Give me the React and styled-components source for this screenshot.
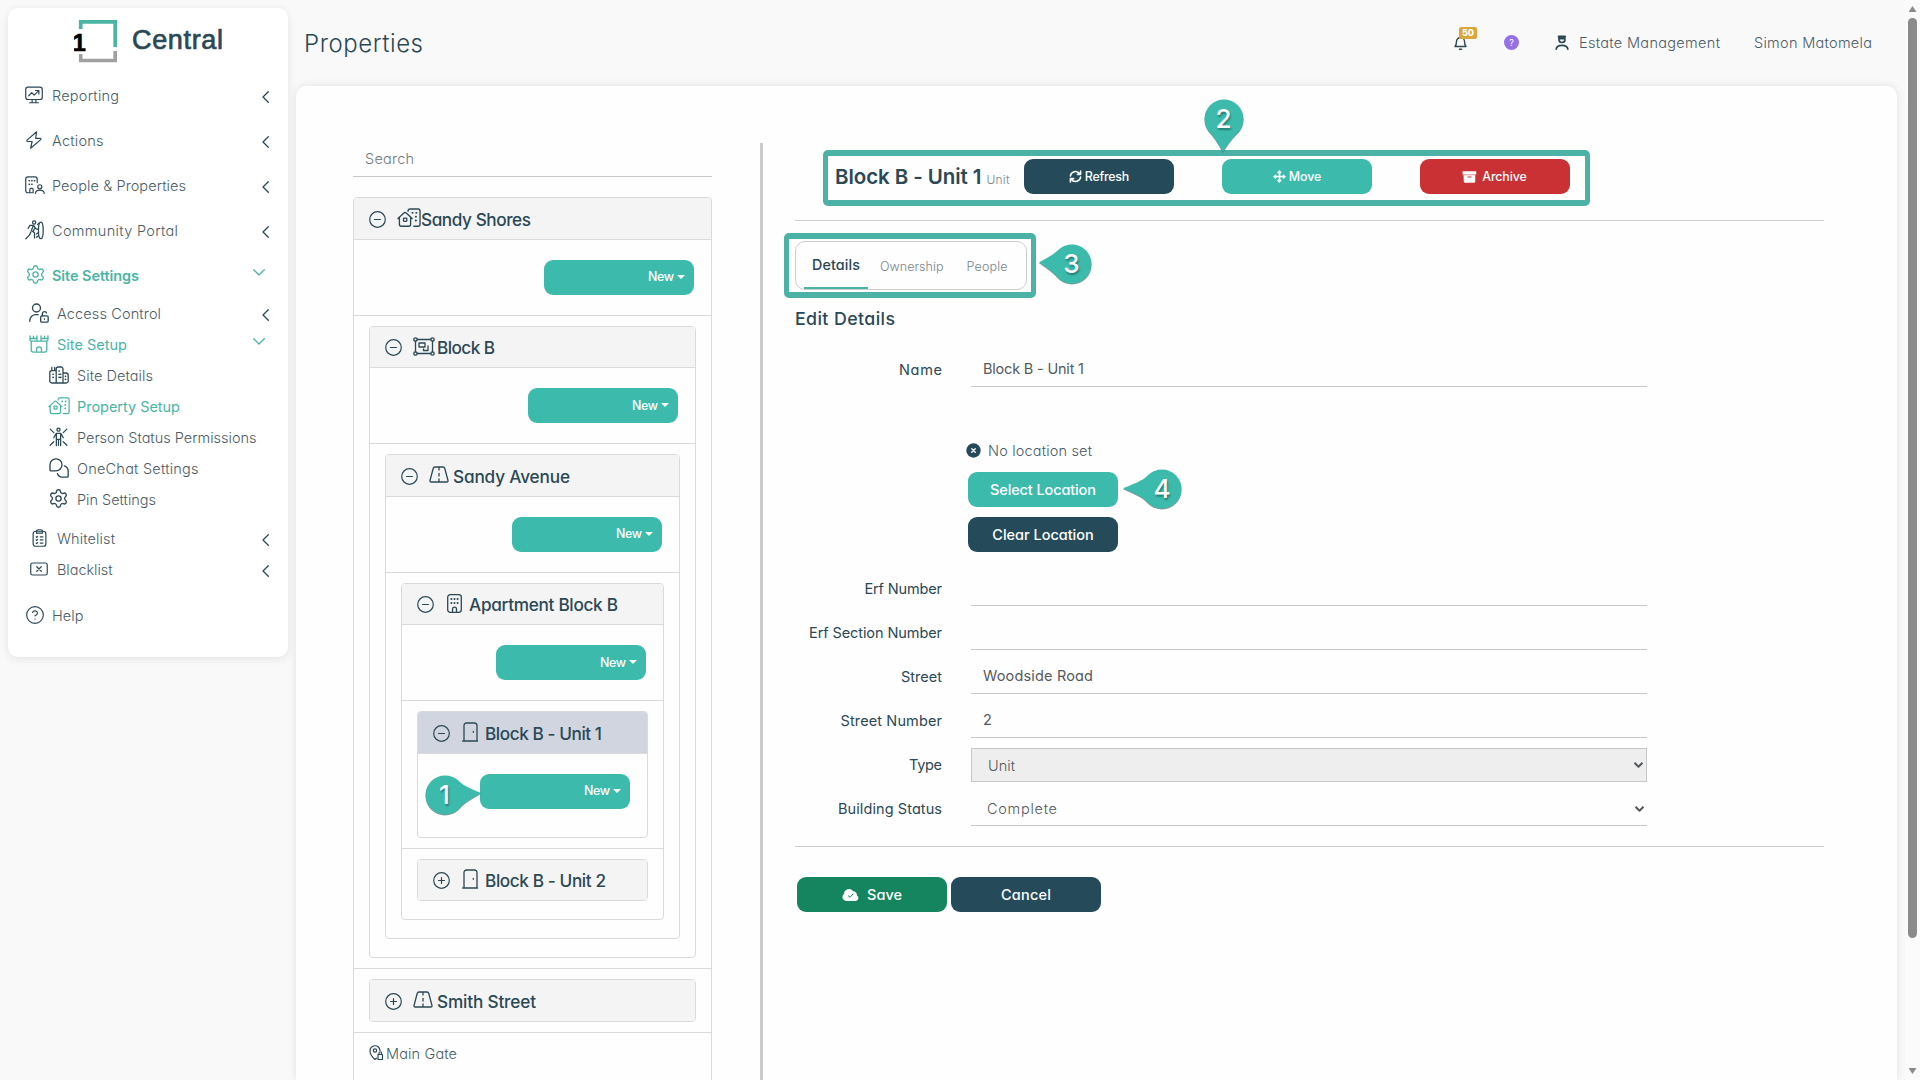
import React, { useLayoutEffect, useRef } from "react";
import styled, { createGlobalStyle, css } from "styled-components";
import { Settings, CircleHelp } from "lucide-react";

const c = {
  ink: "#2b4855",
  soft: "#4a5c65",
  navy: "#254b5a",
  teal: "#3cbbad",
  mint: "#4ab5a4",
  red: "#c93134",
  green: "#158560",
  line: "#cbcdce",
  card: "#d9dbdb",
};

const GlobalStyle = createGlobalStyle`
  *, *::before, *::after { box-sizing: border-box; }
  body {
    margin: 0;
    overflow: hidden;
    background: #f9f9f9;
    color: ${c.ink};
    font-family: Inter, "Open Sans", "Liberation Sans", sans-serif;
    font-size: 14.5px;
    font-weight: 300;
    font-feature-settings: "cv11" 1;
  }
`;

/* Text tracked out so that it fills the given width */
const FitSpan = styled.span`
  display: inline-block;
  white-space: nowrap;
`;

function Fit({ w, children }) {
  const ref = useRef(null);
  useLayoutEffect(() => {
    const el = ref.current;
    el.style.letterSpacing = "0px";
    const natural = el.getBoundingClientRect().width;
    const gaps = Math.max(children.length - 1, 1);
    const ls = (w - natural) / gaps;
    el.style.letterSpacing = `${ls}px`;
    el.style.marginRight = `${-ls}px`;
  }, [w, children]);
  return <FitSpan ref={ref}>{children}</FitSpan>;
}

/* ---------- icons ---------- */

const Glyph = styled.svg`
  display: block;
  flex: none;
  width: ${(p) => p.$w || 20}px;
  height: ${(p) => p.$h || p.$w || 20}px;
  fill: none;
  stroke: currentColor;
  stroke-width: ${(p) => p.$s || 1.6};
  stroke-linecap: round;
  stroke-linejoin: round;
  overflow: visible;
`;

const Reporting = () => (
  <Glyph $w={18} viewBox="0 0 24 24">
    <rect x="1" y="1.5" width="22" height="16.5" rx="3" />
    <path d="M9.5 18v4M14.5 18v4M6 22.3h12M5 13l4-4 3.2 3.2L18 6.500M14 6h4.500v4.500" />
  </Glyph>
);
const Actions = () => (
  <Glyph $w={18} viewBox="0 0 24 24">
    <path d="M15.500 1 2.800 12.200c-.8.800-.3 1.800.8 1.800H9.500l-2 9L21 11.500c.8-.8.300-1.800-.8-1.800h-6z" />
  </Glyph>
);
const People = () => (
  <Glyph $w={20} $h={18} viewBox="0 0 27 24">
    <path d="M9 22.500H4a3 3 0 0 1-3-3V4a3 3 0 0 1 3-3h9.500a3 3 0 0 1 3 3v5M6.500 22.500v-4.500a1.500 1.500 0 0 1 1.500-1.500h1.500a1.500 1.500 0 0 1 1.500 1.500v4.500H7" />
    <path d="M5.500 6.300h.6M9 6.300h.6M12.600 6.300h.6M5.500 11h.6M9 11h.6" strokeWidth="2" />
    <circle cx="20" cy="14.500" r="2.800" />
    <path d="M14 23.500c.3-3.500 2.800-4.500 6-4.500s5.700 1 6 4.500" />
  </Glyph>
);
const Community = () => (
  <Glyph $w={19} $h={20} viewBox="0 0 24 25">
    <circle cx="11.500" cy="3" r="2" />
    <ellipse cx="20" cy="13" rx="3" ry="10.500" />
    <path d="M4 10.500 6 6.800h5l2.500 4 3 1M10.500 7l-2.500 6 4 3v6.500M7.500 15 5.500 19 1 23.500M11.800 11l-1.200 3M16.500 16l-2 1.500M17 20l-2.500 1.500M16 5.500l1.500-1.500" />
  </Glyph>
);
const Access = () => (
  <Glyph $w={20} viewBox="0 0 24 24">
    <circle cx="9" cy="6" r="4.800" />
    <path d="M1 22v-1.500a7 7 0 0 1 7-6.500h3" />
    <rect x="14" y="15.500" width="9" height="7.500" rx="1.500" />
    <path d="M16 15.500v-2.500a2.600 2.600 0 0 1 5-1M18.500 19v.6" />
  </Glyph>
);
const SiteSetup = () => (
  <Glyph $w={20} $h={18} viewBox="0 0 24 22">
    <path d="M1 1v4.500a2 2 0 0 0 2 2h6.500V1M5.200 1.500v3M1 4.300h8.500M14.500 1v6.500H21a2 2 0 0 0 2-2V1M18.800 1.500v3M14.500 4.300H23M9.500 7.500h5M2.500 7.500v11A2.500 2.500 0 0 0 5 21h14a2.500 2.500 0 0 0 2.500-2.500v-11M9 21v-3.500a3 3 0 0 1 6 0V21" />
  </Glyph>
);
const SiteDetails = () => (
  <Glyph $w={20} $h={18} viewBox="0 0 25 22">
    <path d="M9 21H3.500A2.500 2.500 0 0 1 1 18.500V8a2.500 2.500 0 0 1 2.500-2.500H9M3.500 5.500V1.500M7 5.500V1.500M9 21V3.500A2.500 2.500 0 0 1 11.500 1H15a2.500 2.500 0 0 1 2.500 2.500V21M17.500 8.500h3.500a3 3 0 0 1 3 3v7a2.500 2.500 0 0 1-2.500 2.500H9" />
    <path d="M5 10h.3M5 14h.3M12.500 6h.3M14.500 10h.3M12.500 10h.3M12.500 14h.3M14.500 14h.3M20.500 12.500h.3M20.500 16.500h.3" strokeWidth="2" />
  </Glyph>
);
const House = ({ w = 22 }) => (
  <Glyph $w={w} $h={w * 0.8} $s={1.4} viewBox="0 0 25 20">
    <path d="M1 11 7.200 5.300a1.800 1.800 0 0 1 2.400 0L15.800 11M2.500 10v7a2 2 0 0 0 2 2h7.700a2 2 0 0 0 2-2v-7" />
    <rect x="6.800" y="10.500" width="3.400" height="3.400" rx=".5" />
    <path d="M11.500 3.500V3a2 2 0 0 1 2-2H22a2 2 0 0 1 2 2v14a2 2 0 0 1-2 2h-4.500" />
    <path d="M16 5h.3M20 5h.3M19.500 9h.3M19.500 13h.3" strokeWidth="1.900" />
  </Glyph>
);
const Status = () => (
  <Glyph $w={19} $h={20} viewBox="0 0 24 25">
    <circle cx="12" cy="3.200" r="2" />
    <path d="M1.500 2.500 6 7M22.500 2.500 18 7M1.500 23 6 18.500M22.500 23 18 18.500M6 13.500l3-5.500h6l3 5.500M9.300 9v14.500M14.700 9v14.500M12 16v7M10 15.500h4" />
  </Glyph>
);
const Chat = () => (
  <Glyph $w={20} viewBox="0 0 24 24">
    <path d="M1.200 14.500V8.200a7.200 7.200 0 1 1 7.200 7.200H2.200a1 1 0 0 1-1-.9zM18.500 9.500a6.800 6.800 0 0 1 4.500 6.500v6.200a.8.8 0 0 1-.8.800H16.500a6.800 6.800 0 0 1-6.300-4.200" />
  </Glyph>
);
const Whitelist = () => (
  <Glyph $w={15} $h={18} viewBox="0 0 19 24">
    <rect x="1" y="3" width="17" height="20" rx="3.500" />
    <path d="M5.500 5.500V3.500A2.500 2.500 0 0 1 8 1h3a2.500 2.500 0 0 1 2.500 2.500v2zM5 10.500l.8.800 1.200-1.500M5 14.500l.8.800 1.200-1.500M5 18.800l.8.800 1.200-1.500M10.500 10.500H14M10.500 14.500H14M10.500 18.800H14" />
  </Glyph>
);
const Blacklist = () => (
  <Glyph $w={18} $h={14} viewBox="0 0 24 18">
    <rect x="1" y="1" width="22" height="16" rx="2.500" />
    <path d="M9 6l6 6M15 6l-6 6" />
  </Glyph>
);
const Road = () => (
  <Glyph $w={20} $h={17} $s={1.3} viewBox="0 0 20 17">
    <path d="M1 14.500 4.200 2.500A2 2 0 0 1 6.100 1h7.800a2 2 0 0 1 1.900 1.500l3.200 12c.2.900-.3 1.500-1.200 1.500H2.200C1.300 16 .8 15.400 1 14.500zM10 1v3M10 7.300v2.700M10 13v3" />
  </Glyph>
);
const Block = () => (
  <Glyph $w={22} $h={19} $s={1.3} viewBox="0 0 22 19">
    <circle cx="2.500" cy="2.500" r="1.700" />
    <circle cx="19.500" cy="2.500" r="1.700" />
    <circle cx="2.500" cy="16.500" r="1.700" />
    <circle cx="19.500" cy="16.500" r="1.700" />
    <path d="M4.200 2.500h13.600M4.200 16.500h13.600M2.500 4.200v10.600M19.500 4.200v10.600M6 6h6v4H6zM15 9v4.500h-4.500v-1.500" />
  </Glyph>
);
const Apartment = () => (
  <Glyph $w={15} $h={19} $s={1.3} viewBox="0 0 15 19">
    <rect x=".7" y=".7" width="13.600" height="17.600" rx="2.500" />
    <path d="M5.500 18.200v-3a2 2 0 0 1 4 0v3" />
    <path d="M4.300 5h.2M7.400 5h.2M10.500 5h.2M4.300 9h.2M7.400 9h.2M10.500 9h.2" strokeWidth="1.800" />
  </Glyph>
);
const Door = () => (
  <Glyph $w={16} $h={20} $s={1.3} viewBox="0 0 16 20">
    <path d="M.7 19h14.800M2 19V3.500A2.500 2.500 0 0 1 4.500 1h8A2.500 2.500 0 0 1 15 3.500V19M11.300 9.500v.8" />
  </Glyph>
);
const Gate = () => (
  <Glyph $w={15} $h={16} $s={1.2} viewBox="0 0 15 16">
    <circle cx="6" cy="5.500" r="1.700" />
    <path d="M7.500 13.200 6 14.500C2.500 11.500 1 9 1 6a5 5 0 0 1 10-.5M9 9.500h4.500v5H9zM10 9.500V8a1.200 1.200 0 0 1 2.500 0v1.500" />
  </Glyph>
);
const Toggle = ({ open }) => (
  <Glyph $w={17} $s={1.2} viewBox="0 0 17 17">
    <circle cx="8.500" cy="8.500" r="7.800" />
    <path d={open ? "M5.500 8.500h6" : "M5.500 8.500h6M8.500 5.500v6"} />
  </Glyph>
);
const RefreshIcon = () => (
  <Glyph $w={13} $s={1.7} viewBox="0 0 14 14">
    <path d="M1.500 6.500A5.500 5.500 0 0 1 11.500 4M12.500 1.200v3.500H9M12.500 7.500a5.500 5.500 0 0 1-10 2.500M1.500 12.800V9.300H5" />
  </Glyph>
);
const MoveIcon = () => (
  <Glyph $w={13} $s={1.8} viewBox="0 0 14 14">
    <path d="M7 2.500v9M2.500 7h9" />
    <path d="M7 .8 8.800 3H5.200zM7 13.200 8.800 11H5.200zM.8 7 3 5.200v3.600zM13.200 7 11 5.200v3.600z" fill="currentColor" strokeWidth="1" />
  </Glyph>
);
const ArchiveIcon = () => (
  <Glyph $w={13} $h={12} $s={0.5} viewBox="0 0 13 12">
    <path d="M0 .5h13v2.800H0z" fill="currentColor" />
    <path d="M1 4.200h11v6.300a1 1 0 0 1-1 1H2a1 1 0 0 1-1-1z" fill="currentColor" />
    <path d="M5 6h3" stroke={c.red} strokeWidth="1" />
  </Glyph>
);
const CloudIcon = () => (
  <Glyph $w={17} $h={13} viewBox="0 0 17 13">
    <path d="M4.200 13A4 4 0 0 1 2 5.800 5 5 0 0 1 11 3a4.200 4.200 0 0 1 4 4.500A3 3 0 0 1 14 13z" fill="currentColor" stroke="none" />
    <path d="M6.300 7.800 8 9.300l3-3.300" stroke={c.green} strokeWidth="1" />
  </Glyph>
);
const BellIcon = () => (
  <Glyph $w={13} $h={14} $s={1.4} viewBox="0 0 13 14">
    <path d="M1 10.500c1.200-1.500 1.500-2.500 1.500-5a4 4 0 0 1 8 0c0 2.500.3 3.500 1.500 5zM5.500 13.200h2" />
  </Glyph>
);
const OfficerIcon = () => (
  <Glyph $w={14} $h={15} $s={1.7} viewBox="0 0 14 15">
    <path d="M3.500 1h7l-.6 3H4.100z" fill="currentColor" strokeWidth="1" />
    <path d="M4 4.500a3 3 0 0 0 6 0M1.200 14.200C1.500 11.500 4 10.300 7 10.300s5.500 1.200 5.800 3.900" />
  </Glyph>
);
const CrossDot = () => (
  <Glyph $w={15} $s={1.3} viewBox="0 0 15 15">
    <circle cx="7.500" cy="7.500" r="7.200" fill={c.navy} stroke="none" />
    <path d="M5.700 5.700l3.600 3.600M9.300 5.700 5.700 9.300" stroke="#fff" />
  </Glyph>
);
const ChevronLeft = () => (
  <Glyph $w={7} $h={12} $s={1.3} viewBox="0 0 7 12">
    <path d="M6.300.700 1 6l5.300 5.300" />
  </Glyph>
);
const ChevronDown = () => (
  <Glyph $w={12} $h={7} $s={1.3} viewBox="0 0 12 7">
    <path d="M.700.700 6 6 11.300.700" />
  </Glyph>
);
const SelectArrow = () => (
  <Glyph $w={9} $h={6} $s={2} viewBox="0 0 9 6">
    <path d="M.5.700l4 4 4-4" strokeLinecap="butt" />
  </Glyph>
);

/* ---------- shell ---------- */

const Page = styled.div`
  position: relative;
  display: flex;
  width: 1920px;
  height: 1080px;
  overflow: hidden;
  background: #f9f9f9;
`;

const Sidebar = styled.nav`
  display: flex;
  flex-direction: column;
  flex: none;
  width: 280px;
  height: 649px;
  margin: 8px 8px 0;
  border-radius: 10px;
  background: #fff;
  box-shadow: 0 2px 10px rgba(0, 0, 0, 0.09);
`;

const Brand = styled.div`
  display: flex;
  align-items: center;
  gap: 14px;
  height: 64.5px;
  padding-left: 66px;
  font: 400 27px "Liberation Sans", Arial, sans-serif;
  color: ${c.ink};
  -webkit-text-stroke: 0.7px ${c.ink};
`;

const LogoMark = styled.svg`
  width: 44px;
  height: 43px;
  margin-top: 2px;
  -webkit-text-stroke: 0;
`;

const LogoDigit = styled.text`
  font: 700 24px "Liberation Sans", Arial, sans-serif;
  fill: #000;
  stroke: #000;
  stroke-width: 0.6px;
`;

const indent = { 1: 17, 2: 21, 3: 40 };
const iconCol = { 1: 27, 2: 28, 3: 29 };

const NavItem = styled.a`
  display: flex;
  align-items: center;
  flex: none;
  height: ${(p) => (p.$level === 1 ? 45 : 31)}px;
  margin-top: ${(p) => (p.$gap ? 8 : 0)}px;
  padding: 0 19px 0 ${(p) => indent[p.$level]}px;
  color: ${(p) => (p.$active ? c.mint : c.soft)};
  font-weight: ${(p) => (p.$strong ? 600 : p.$active ? 400 : 300)};
`;

const NavIcon = styled.span`
  display: flex;
  align-items: center;
  flex: none;
  width: ${(p) => iconCol[p.$level]}px;
  margin-top: -1px;
  padding-left: ${(p) => p.$inset || 0}px;
  color: ${(p) => (p.$active ? c.mint : c.ink)};
`;

const NavArrow = styled.span`
  margin-left: auto;
  padding-top: ${(p) => (p.$open ? 0 : 3)}px;
  padding-bottom: ${(p) => (p.$open ? 6 : 0)}px;
  padding-right: ${(p) => (p.$open ? 4 : 0)}px;
  color: ${(p) => (p.$open ? c.mint : c.ink)};
`;

const Main = styled.main`
  display: flex;
  flex-direction: column;
  flex: none;
  width: 1601px;
  height: 1080px;
`;

const TopBar = styled.header`
  display: flex;
  align-items: center;
  flex: none;
  height: 86px;
  padding-left: 8px;
  color: ${c.soft};
`;

const PageTitle = styled.h1`
  margin: 0;
  font-size: 24px;
  font-weight: 300;
  color: ${c.ink};
`;

const TopActions = styled.div`
  display: flex;
  align-items: center;
  margin-left: auto;
  padding: 0 25px 1px 0;
`;

const Bell = styled.span`
  position: relative;
  margin-right: 37px;
  color: ${c.ink};
`;

const Count = styled.span`
  position: absolute;
  left: 5px;
  top: -9px;
  width: 18px;
  height: 12px;
  border-radius: 2px;
  background: #dba63a;
  color: #fff;
  font-size: 9px;
  font-weight: 800;
  line-height: 12px;
  text-align: center;
`;

const HelpDot = styled.span`
  width: 15px;
  height: 15px;
  margin-right: 36px;
  border-radius: 50%;
  background: #9670e4;
  color: #fff;
  font-size: 9px;
  font-weight: 400;
  line-height: 15px;
  text-align: center;
`;

const Role = styled.span`
  display: flex;
  align-items: center;
  gap: 10px;
  margin-right: 34px;
  svg { color: ${c.ink}; }
`;

const Panel = styled.section`
  display: flex;
  flex: 1;
  min-height: 0;
  padding: 57px 0 0 57px;
  overflow: hidden;
  border-radius: 10px 10px 0 0;
  background: #fefefe;
  box-shadow: 0 0 8px rgba(0, 0, 0, 0.1);
`;

/* ---------- property tree ---------- */

const Tree = styled.div`
  flex: none;
  width: 359px;
`;

const Search = styled.div`
  display: flex;
  align-items: center;
  height: 34px;
  margin-bottom: 20px;
  padding: 0 0 2px 12px;
  border-bottom: 1px solid #c8caca;
  color: #70787c;
`;

const Card = styled.div`
  border: 1px solid ${c.card};
  border-radius: 4px;
  background: #fefefe;
  ${(p) => p.$root && css`height: 1000px;`}
`;

const CardHead = styled.div`
  display: flex;
  align-items: center;
  height: ${(p) => (p.$closed ? 40.5 : 41.5)}px;
  padding: 2px 0 0 15px;
  border-bottom: ${(p) => (p.$closed ? 0 : 1)}px solid ${c.card};
  border-radius: ${(p) => (p.$closed ? "3px" : "3px 3px 0 0")};
  background: ${(p) => (p.$selected ? "#d0d5df" : "#f4f4f4")};
  font-size: 17.2px;
  font-weight: 500;
`;

const CardIcon = styled.span`
  display: flex;
  align-items: center;
  width: 35px;
  margin-top: -3px;
  padding-left: ${(p) => p.$inset}px;
`;

const ActionRow = styled.div`
  display: flex;
  justify-content: flex-end;
  height: 76px;
  padding: 20px 17px 0 0;
  border-bottom: ${(p) => (p.$leaf ? 0 : 1)}px solid ${c.card};
  ${(p) => p.$leaf && css`height: 83px;`}
`;

const Branch = styled.div`
  padding: 10px 15px ${(p) => (p.$last ? 18 : 10)}px;
  border-bottom: ${(p) => (p.$last ? 0 : 1)}px solid ${c.card};
`;

const GateRow = styled.div`
  display: flex;
  align-items: center;
  gap: 2px;
  height: 41px;
  padding-left: 15px;
  color: ${c.soft};
  svg { color: ${c.ink}; }
`;

const tones = { teal: c.teal, navy: c.navy, red: c.red, green: c.green };

const Button = styled.button`
  display: flex;
  align-items: center;
  justify-content: ${(p) => (p.$menu ? "flex-end" : "center")};
  gap: ${(p) => p.$gap || 3}px;
  width: 150px;
  height: 35px;
  padding: ${(p) => (p.$menu ? "0 9px 1px 0" : "0")};
  border: 0;
  border-radius: 9px;
  background: ${(p) => tones[p.$tone]};
  color: #fff;
  font-family: inherit;
  font-feature-settings: inherit;
  font-size: ${(p) => (p.$large ? 14.5 : 12.4)}px;
  font-weight: 500;
`;

const Caret = styled.i`
  border: 4px solid transparent;
  border-top-color: #fff;
  border-bottom: 0;
`;

const cardIcons = {
  estate: [<House w={24} />, 3],
  block: [<Block />, 3],
  road: [<Road />, 3],
  apartment: [<Apartment />, 5],
  door: [<Door />, 4],
};

function Head({ icon, name, w, open, selected }) {
  const [svg, inset] = cardIcons[icon];
  return (
    <CardHead $closed={!open} $selected={selected}>
      <Toggle open={open} />
      <CardIcon $inset={inset + 8}>{svg}</CardIcon>
      <Fit w={w}>{name}</Fit>
    </CardHead>
  );
}

function Node({ node, root }) {
  const kids = node.children || [];
  return (
    <Card $root={root}>
      <Head {...node} />
      {node.open && (
        <ActionRow $leaf={!kids.length}>
          <Button $tone="teal" $menu>
            <Fit w={26}>New</Fit>
            <Caret />
          </Button>
        </ActionRow>
      )}
      {kids.map((k, i) => (
        <Branch key={k.name} $last={!root && i === kids.length - 1}>
          <Node node={k} />
        </Branch>
      ))}
      {root && (
        <GateRow>
          <Gate />
          <Fit w={71}>Main Gate</Fit>
        </GateRow>
      )}
    </Card>
  );
}

const estate = {
  icon: "estate", name: "Sandy Shores", w: 110, open: true,
  children: [
    {
      icon: "block", name: "Block B", w: 58, open: true,
      children: [
        {
          icon: "road", name: "Sandy Avenue", w: 117, open: true,
          children: [
            {
              icon: "apartment", name: "Apartment Block B", w: 149, open: true,
              children: [
                { icon: "door", name: "Block B - Unit 1", w: 117, open: true, selected: true },
                { icon: "door", name: "Block B - Unit 2", w: 121 },
              ],
            },
          ],
        },
      ],
    },
    { icon: "road", name: "Smith Street", w: 99 },
  ],
};

/* ---------- details ---------- */

const Splitter = styled.div`
  flex: none;
  width: 3px;
  margin: 0 32px 0 48px;
  background: #cacaca;
`;

const Details = styled.div`
  flex: none;
  width: 1029px;
`;

const UnitBar = styled.div`
  display: flex;
  align-items: center;
  height: 78px;
  padding: 16px 0 26px 40px;
  border-bottom: 1px solid ${c.line};
`;

const UnitName = styled.h2`
  display: flex;
  align-items: baseline;
  gap: 5px;
  width: 189px;
  margin: 0;
  font-size: 20.5px;
  font-weight: 600;
`;

const UnitKind = styled.small`
  color: #78858b;
  font-size: 12px;
  font-weight: 300;
`;

const UnitButtons = styled.div`
  display: flex;
  gap: 48px;
`;

const Tabs = styled.div`
  display: flex;
  width: 232px;
  height: 49px;
  margin-top: 20px;
  padding: 0 8px;
  border: 1px solid ${c.line};
  border-radius: 10px;
`;

const Tab = styled.div`
  display: flex;
  align-items: center;
  padding: ${(p) => (p.$active ? "0 8px 1px" : "2px 11px 0 12px")};
  border-bottom: ${(p) => (p.$active ? 2 : 0)}px solid ${c.mint};
  color: ${(p) => (p.$active ? c.ink : "#78858b")};
  font-size: ${(p) => (p.$active ? 14.3 : 12.5)}px;
  font-weight: ${(p) => (p.$active ? 500 : 300)};
`;

const SectionTitle = styled.h3`
  display: flex;
  align-items: center;
  height: 36px;
  margin: 10px 0 17px;
  font-size: 17.8px;
  font-weight: 500;
`;

const Form = styled.div`
  display: flex;
  flex-direction: column;
  gap: 10px;
  padding-bottom: 20px;
  border-bottom: 1px solid ${c.line};
`;

const Field = styled.div`
  display: grid;
  grid-template-columns: 147px 676px;
  column-gap: 29px;
`;

const Label = styled.label`
  display: flex;
  align-items: center;
  justify-content: flex-end;
  padding-bottom: 2px;
  font-weight: 400;
`;

const Control = styled.div`
  display: flex;
  align-items: center;
  justify-content: space-between;
  height: 34px;
  border-bottom: 1px solid #c6c8c8;
  color: #54595c;
  font-weight: ${(p) => (p.$select ? 300 : 400)};
  padding: ${(p) => (p.$select ? "0 3px 0 16px" : "0 0 2px 12px")};
  ${(p) => p.$disabled && css`
    border: 1px solid #c6c8c8;
    background: #eeeeee;
  `}
`;

const Location = styled.div`
  display: flex;
  flex-direction: column;
  gap: 10px;
  margin: 41px 0 10px 173px;
`;

const LocationState = styled.div`
  display: flex;
  align-items: center;
  gap: 7px;
  height: 24px;
  margin-left: -2px;
  color: ${c.soft};
`;

const FormButtons = styled.div`
  display: flex;
  gap: 4px;
  padding: 30px 0 0 2px;
`;

const fields = [
  { label: "Erf Number", lw: 77.5 },
  { label: "Erf Section Number", lw: 133 },
  { label: "Street", lw: 41, value: "Woodside Road", vw: 110 },
  { label: "Street Number", lw: 101.5, value: "2", vw: 9 },
  { label: "Type", lw: 33, value: "Unit", vw: 27, select: true, disabled: true },
  { label: "Building Status", lw: 104, value: "Complete", vw: 70, select: true },
];

function FormField({ label, lw, value, vw, select, disabled }) {
  return (
    <Field>
      <Label><Fit w={lw}>{label}</Fit></Label>
      <Control $select={select} $disabled={disabled}>
        {value && <Fit w={vw}>{value}</Fit>}
        {select && <SelectArrow />}
      </Control>
    </Field>
  );
}

/* ---------- scrollbar ---------- */

const ScrollTrack = styled.div`
  display: flex;
  flex-direction: column;
  align-items: center;
  flex: none;
  width: 15px;
  margin-left: 8px;
  padding-top: 6px;
  background: #fbfbfb;
`;

const ScrollThumb = styled.div`
  width: 9px;
  height: 920px;
  margin: 6px 0 130px;
  border-radius: 5px;
  background: #8b8b8b;
`;

const ScrollArrow = styled.i`
  width: 8px;
  height: 6px;
  background: #8b8b8b;
  clip-path: ${(p) => (p.$up ? "polygon(50% 0, 100% 100%, 0 100%)" : "polygon(0 0, 100% 0, 50% 100%)")};
`;

/* ---------- callouts over the page ---------- */

const Outline = styled.div`
  position: absolute;
  left: ${(p) => p.$x}px;
  top: ${(p) => p.$y}px;
  width: ${(p) => p.$w}px;
  height: ${(p) => p.$h}px;
  border: solid #4bb2a5;
  border-width: 6px 5px;
  border-radius: 5px;
`;

const Pin = styled.div`
  position: absolute;
  left: ${(p) => p.$x - 20}px;
  top: ${(p) => p.$y - 20}px;
  width: 40px;
  height: 40px;
  color: #fff;
  font-size: 26px;
  font-weight: 500;
  line-height: 39px;
  text-align: center;
  text-shadow: 1px 2px 2px rgba(20, 70, 65, 0.55);
`;

const PinShape = styled.svg`
  position: absolute;
  inset: 0;
  width: 40px;
  height: 40px;
  overflow: visible;
  fill: ${c.teal};
  filter: drop-shadow(0 1px 0.5px rgba(30, 90, 85, 0.6));
`;

const PinText = styled.span`
  position: relative;
`;

function Callout({ x, y, n, angle, reach }) {
  return (
    <Pin $x={x} $y={y}>
      <PinShape viewBox="-20 -20 40 40">
        <circle r="19.500" />
        <path
          transform={`rotate(${angle})`}
          d={`M8 -17.800 Q14 -14 17 -11 Q20 -8 ${reach} 0 Q20 8 17 11 Q14 14 8 17.800z`}
        />
      </PinShape>
      <PinText>{n}</PinText>
    </Pin>
  );
}

const nav = [
  { t: "Reporting", w: 67, l: 1, i: <Reporting />, a: "l" },
  { t: "Actions", w: 51.5, l: 1, i: <Actions />, a: "l" },
  { t: "People & Properties", w: 134, l: 1, i: <People />, a: "l" },
  { t: "Community Portal", w: 126, l: 1, i: <Community />, a: "l" },
  { t: "Site Settings", w: 87, l: 1, i: <Settings size={21} strokeWidth={1.5} />, a: "d", strong: true, on: true, inset: -1 },
  { t: "Access Control", w: 104, l: 2, i: <Access />, a: "l" },
  { t: "Site Setup", w: 70, l: 2, i: <SiteSetup />, a: "d", on: true },
  { t: "Site Details", w: 76, l: 3, i: <SiteDetails />, inset: 1 },
  { t: "Property Setup", w: 103, l: 3, i: <House />, on: true },
  { t: "Person Status Permissions", w: 179.5, l: 3, i: <Status />, inset: 1 },
  { t: "OneChat Settings", w: 121.5, l: 3, i: <Chat />, inset: 1 },
  { t: "Pin Settings", w: 79, l: 3, i: <Settings size={21} strokeWidth={1.5} /> },
  { t: "Whitelist", w: 58, l: 2, i: <Whitelist />, a: "l", gap: true, inset: 3 },
  { t: "Blacklist", w: 55.5, l: 2, i: <Blacklist />, a: "l", inset: 1 },
  { t: "Help", w: 31.5, l: 1, i: <CircleHelp size={20} strokeWidth={1.4} />, gap: true },
];

export default function App() {
  return (
    <>
      <GlobalStyle />
      <Page>
        <Sidebar>
          <Brand>
            <LogoMark viewBox="0 0 44 43">
              <path d="M6.700 9V1.900h34.500V27" fill="none" stroke={c.mint} strokeWidth="3.700" />
              <path d="M6.700 34v6.500h34.500V31" fill="none" stroke="#a0a0a0" strokeWidth="3.600" />
              <LogoDigit x="-1.500" y="30.500">1</LogoDigit>
            </LogoMark>
            <Fit w={91}>Central</Fit>
          </Brand>
          {nav.map((n) => (
            <NavItem key={n.t} $level={n.l} $gap={n.gap} $active={n.on} $strong={n.strong}>
              <NavIcon $level={n.l} $active={n.on} $inset={n.inset}>{n.i}</NavIcon>
              <Fit w={n.w}>{n.t}</Fit>
              {n.a && (
                <NavArrow $open={n.a === "d"}>
                  {n.a === "d" ? <ChevronDown /> : <ChevronLeft />}
                </NavArrow>
              )}
            </NavItem>
          ))}
        </Sidebar>

        <Main>
          <TopBar>
            <PageTitle><Fit w={119}>Properties</Fit></PageTitle>
            <TopActions>
              <Bell>
                <BellIcon />
                <Count>50</Count>
              </Bell>
              <HelpDot>?</HelpDot>
              <Role>
                <OfficerIcon />
                <Fit w={141}>Estate Management</Fit>
              </Role>
              <Fit w={118}>Simon Matomela</Fit>
            </TopActions>
          </TopBar>

          <Panel>
            <Tree>
              <Search><Fit w={49}>Search</Fit></Search>
              <Node node={estate} root />
            </Tree>
            <Splitter />
            <Details>
              <UnitBar>
                <UnitName>
                  <Fit w={146.500}>Block B - Unit 1</Fit>
                  <UnitKind><Fit w={23}>Unit</Fit></UnitKind>
                </UnitName>
                <UnitButtons>
                  <Button $tone="navy"><RefreshIcon /><Fit w={44.500}>Refresh</Fit></Button>
                  <Button $tone="teal"><MoveIcon /><Fit w={32.500}>Move</Fit></Button>
                  <Button $tone="red" $gap={6}><ArchiveIcon /><Fit w={44.500}>Archive</Fit></Button>
                </UnitButtons>
              </UnitBar>
              <Tabs>
                <Tab $active><Fit w={48}>Details</Fit></Tab>
                <Tab><Fit w={63.500}>Ownership</Fit></Tab>
                <Tab><Fit w={41}>People</Fit></Tab>
              </Tabs>
              <SectionTitle><Fit w={100}>Edit Details</Fit></SectionTitle>
              <Form>
                <FormField label="Name" lw={43} value="Block B - Unit 1" vw={101} />
                <Location>
                  <LocationState>
                    <CrossDot />
                    <Fit w={104}>No location set</Fit>
                  </LocationState>
                  <Button $tone="teal" $large><Fit w={106}>Select Location</Fit></Button>
                  <Button $tone="navy" $large><Fit w={101.500}>Clear Location</Fit></Button>
                </Location>
                {fields.map((f) => <FormField key={f.label} {...f} />)}
              </Form>
              <FormButtons>
                <Button $tone="green" $large $gap={8}><CloudIcon /><Fit w={35}>Save</Fit></Button>
                <Button $tone="navy" $large><Fit w={50}>Cancel</Fit></Button>
              </FormButtons>
            </Details>
          </Panel>
        </Main>

        <ScrollTrack>
          <ScrollArrow $up />
          <ScrollThumb />
          <ScrollArrow />
        </ScrollTrack>

        <Outline $x={823} $y={150} $w={767} $h={56} />
        <Outline $x={784} $y={233} $w={252} $h={65} />
        <Callout x={444.500} y={795} n="1" angle={-3} reach={36} />
        <Callout x={1223.500} y={118.500} n="2" angle={92} reach={33} />
        <Callout x={1071.500} y={264} n="3" angle={183} reach={33} />
        <Callout x={1162} y={489} n="4" angle={181} reach={39} />
      </Page>
    </>
  );
}
